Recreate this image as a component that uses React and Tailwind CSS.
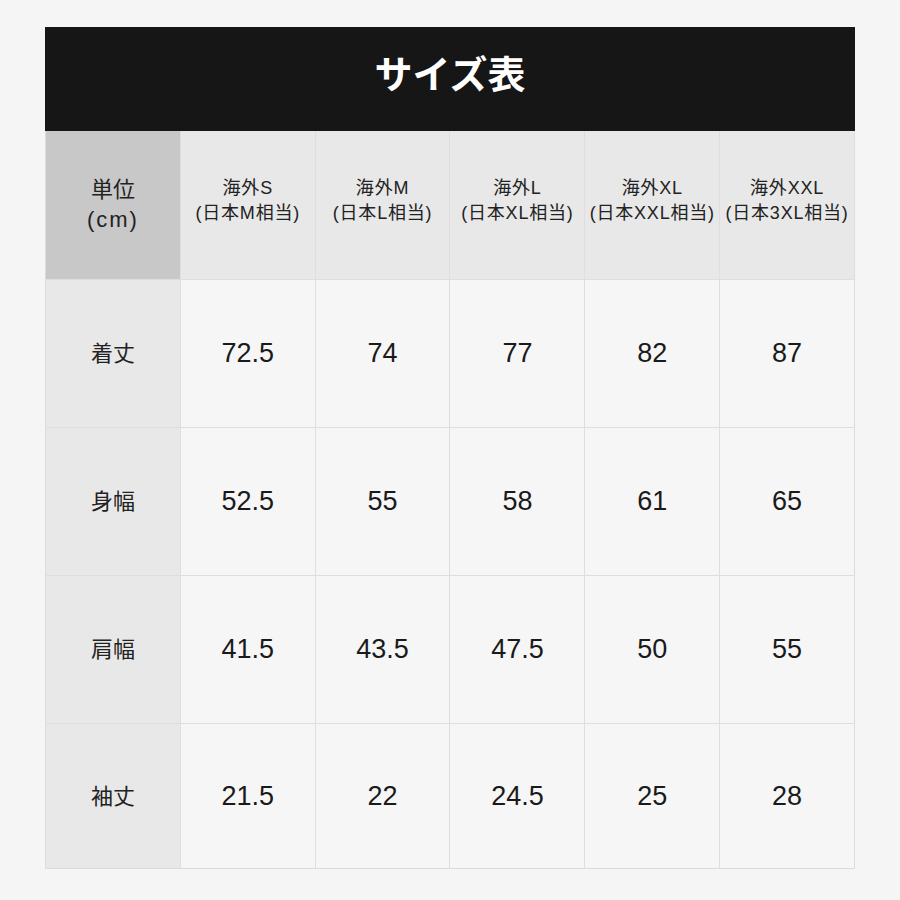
import React from "react";

const font = { fontFamily: '"Liberation Sans", "Noto Sans CJK JP", sans-serif' };

const headers = [
  ["海外S", "(日本M相当)"],
  ["海外M", "(日本L相当)"],
  ["海外L", "(日本XL相当)"],
  ["海外XL", "(日本XXL相当)"],
  ["海外XXL", "(日本3XL相当)"],
];

const rows = [
  ["着丈", ["72.5", "74", "77", "82", "87"], "h-[147px]"],
  ["身幅", ["52.5", "55", "58", "61", "65"], "h-[147px]"],
  ["肩幅", ["41.5", "43.5", "47.5", "50", "55"], "h-[147px]"],
  ["袖丈", ["21.5", "22", "24.5", "25", "28"], "h-[144px]"],
];

export default function App() {
  return (
    <div className="min-h-[900px] w-[900px] bg-[#f5f5f5] pt-[27px] px-[45px]" style={font}>
      <div className="h-[104px] bg-[#161616] flex items-center justify-center pb-[14px]">
        <span className="text-white text-[38px] font-bold leading-none" style={{ fontFamily: '"Noto Sans CJK JP", sans-serif' }}>
          サイズ表
        </span>
      </div>
      <div className="grid grid-cols-6 gap-px bg-[#dedede] border-l border-r border-b border-[#dcdcdc]">
        <div className="h-[148px] bg-[#c8c8c8] flex flex-col items-center justify-center text-[22px] leading-[30px] text-[#222]">
          <span>単位</span>
          <span className="tracking-[2px]">(cm)</span>
        </div>
        {headers.map(([a, b]) => (
          <div key={a} className="h-[148px] bg-[#e8e8e8] flex flex-col items-center justify-center pb-[8px] text-[18px] leading-[25px] text-[#222] whitespace-nowrap tracking-[0.8px]">
            <span>{a}</span>
            <span>{b}</span>
          </div>
        ))}
        {rows.map(([label, vals, h]) => (
          <React.Fragment key={label}>
            <div className={`${h} bg-[#e8e8e8] flex items-center justify-center text-[22px] text-[#222]`}>
              {label}
            </div>
            {vals.map((v, i) => (
              <div key={i} className={`${h} bg-[#f6f6f6] flex items-center justify-center text-[27px] text-[#1a1a1a]`}>
                {v}
              </div>
            ))}
          </React.Fragment>
        ))}
      </div>
    </div>
  );
}
